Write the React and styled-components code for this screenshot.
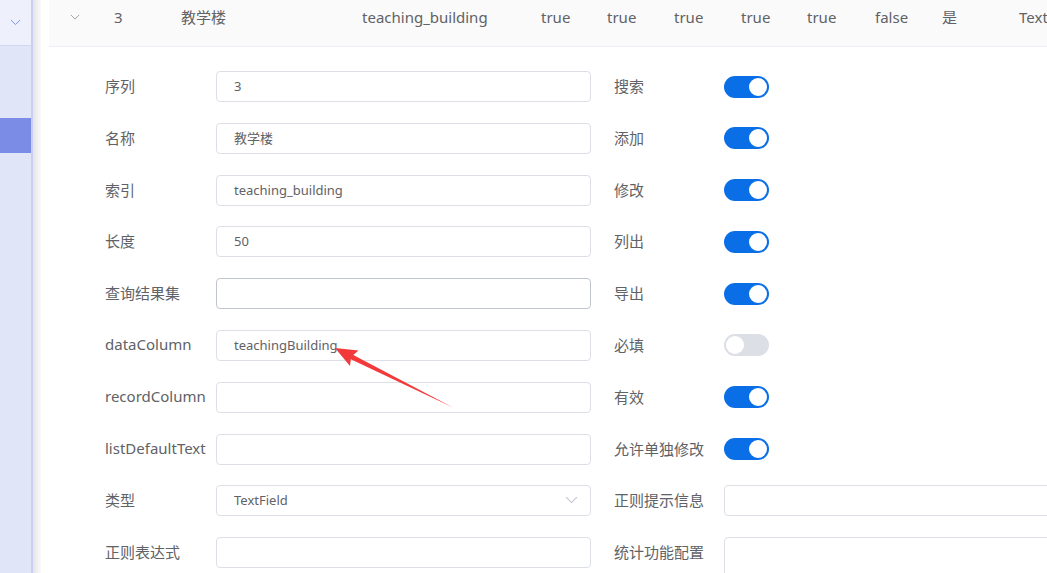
import styled, { createGlobalStyle } from "styled-components"

const GlobalStyle = createGlobalStyle`
    html, body {
        margin: 0;
        padding: 0;
        background: #fff;
        overflow: hidden;
    }
    body {
        font-family: "Noto Sans", "Noto Sans CJK SC", sans-serif;
        color: #606266;
    }
`
const Page = styled.div`
    position: relative;
    display: flex;
    width: 100vw;
    height: 100vh;
    overflow: hidden;
`
const Sidebar = styled.div`
    flex: 0 0 31px;
    display: flex;
    flex-direction: column;
    background: #e1e5f8;
    border-right: 2px solid #c9cff4;
`
const SideTop = styled.div`
    height: 45px;
    display: flex;
    align-items: center;
    justify-content: center;
    background: #eef0fb;
    border-bottom: 1px solid #d3d8f1;
`
const SideSpace = styled.div`
    height: 72px;
`
const SideActive = styled.div`
    height: 35px;
    background: #7b8ce6;
`
const Shade = styled.div`
    flex: 0 0 8px;
    background: linear-gradient(to right, #e4e4e4, #fbfbfb);
`
const Main = styled.div`
    flex: 0 0 1300px;
    padding-left: 8px;
`
const Row = styled.div`
    display: flex;
    align-items: center;
    height: 47px;
    background: #fafafa;
    border-bottom: 1px solid #ebeef5;
    font-size: 15px;
    color: #606266;
    white-space: nowrap;
    padding-bottom: 13px;
    box-sizing: border-box;
`
const Cell = styled.div`
    flex: 0 0 ${p => p.$w}px;
    padding-left: ${p => p.$pad || 0}px;
    box-sizing: border-box;
    display: flex;
    align-items: center;
`
const Form = styled.div`
    display: grid;
    grid-template-columns: 111px 375px 133px 400px;
    grid-auto-rows: 31px;
    row-gap: 20.8px;
    padding: 24px 0 0 56px;
`
const Label = styled.div`
    display: flex;
    align-items: center;
    padding-left: ${p => (p.$right ? 23 : 0)}px;
    padding-bottom: 2px;
    font-size: 15px;
    color: #606266;
    white-space: nowrap;
`
const Input = styled.div`
    display: flex;
    align-items: center;
    box-sizing: border-box;
    height: ${p => (p.$tall ? 70 : 31)}px;
    align-self: start;
    padding: 0 17px 1px;
    border: 1px solid ${p => (p.$hover ? "#c0c4cc" : "#dcdfe6")};
    border-radius: 4px;
    font-size: 13px;
    color: #606266;
    background: #fff;
`
const Caret = styled.span`
    margin-left: auto;
    margin-right: -5px;
    display: flex;
`
const SwitchWrap = styled.div`
    display: flex;
    align-items: center;
`
const Track = styled.div`
    position: relative;
    width: 45px;
    height: 22px;
    border-radius: 11px;
    background: ${p => (p.$on ? "#0a6fe6" : "#dcdfe6")};
`
const Knob = styled.div`
    position: absolute;
    top: 2px;
    left: ${p => (p.$on ? 25 : 2)}px;
    width: 18px;
    height: 18px;
    border-radius: 50%;
    background: #fff;
`
const Overlay = styled.svg`
    position: absolute;
    left: 0;
    top: 0;
    pointer-events: none;
`

const Chevron = ({ color, size = 12 }) => (
    <svg width={size} height={size * 0.6} viewBox="0 0 12 7" fill="none">
        <path d="M1 1l5 5 5-5" stroke={color} strokeWidth="1" />
    </svg>
)

const Switch = ({ on }) => (
    <SwitchWrap>
        <Track $on={on}><Knob $on={on} /></Track>
    </SwitchWrap>
)

const rowCells = [
    { w: 65, pad: 21, icon: true },
    { w: 67, t: "3" },
    { w: 181, t: "教学楼" },
    { w: 179, t: "teaching_building" },
    { w: 66, t: "true" },
    { w: 67, t: "true" },
    { w: 67, t: "true" },
    { w: 66, t: "true" },
    { w: 68, t: "true" },
    { w: 67, t: "false" },
    { w: 77, t: "是" },
    { w: 80, t: "TextField" },
]

const rows = [
    { l: "序列", v: "3", r: "搜索", on: true },
    { l: "名称", v: "教学楼", r: "添加", on: true },
    { l: "索引", v: "teaching_building", r: "修改", on: true },
    { l: "长度", v: "50", r: "列出", on: true },
    { l: "查询结果集", v: "", hover: true, r: "导出", on: true },
    { l: "dataColumn", v: "teachingBuilding", r: "必填", on: false },
    { l: "recordColumn", v: "", r: "有效", on: true },
    { l: "listDefaultText", v: "", r: "允许单独修改", on: true },
    { l: "类型", v: "TextField", select: true, r: "正则提示信息", input: true },
    { l: "正则表达式", v: "", r: "统计功能配置", input: true, tall: true },
]

const App = () => {
    return (
        <Page>
            <GlobalStyle />
            <Sidebar>
                <SideTop><Chevron color="#7b8ce6" size={11} /></SideTop>
                <SideSpace />
                <SideActive />
            </Sidebar>
            <Shade />
            <Main>
                <Row>
                    {rowCells.map((c, i) => (
                        <Cell key={i} $w={c.w} $pad={c.pad}>
                            {c.icon ? <Chevron color="#909399" size={10} /> : c.t}
                        </Cell>
                    ))}
                </Row>
                <Form>
                    {rows.map(r => [
                        <Label key={r.l + "l"}>{r.l}</Label>,
                        <Input key={r.l + "i"} $hover={r.hover}>
                            {r.v}
                            {r.select && <Caret><Chevron color="#c0c4cc" size={13} /></Caret>}
                        </Input>,
                        <Label key={r.r + "l"} $right>{r.r}</Label>,
                        r.input
                            ? <Input key={r.r + "i"} $tall={r.tall} />
                            : <Switch key={r.r + "s"} on={r.on} />,
                    ])}
                </Form>
            </Main>
            <Overlay width="1047" height="573">
                <polygon
                    points="335,348 358.5,350.5 353.3,355 453,407.5 350.8,359.3 350,366"
                    fill="#f23a3a"
                />
            </Overlay>
        </Page>
    )
}

export default App
